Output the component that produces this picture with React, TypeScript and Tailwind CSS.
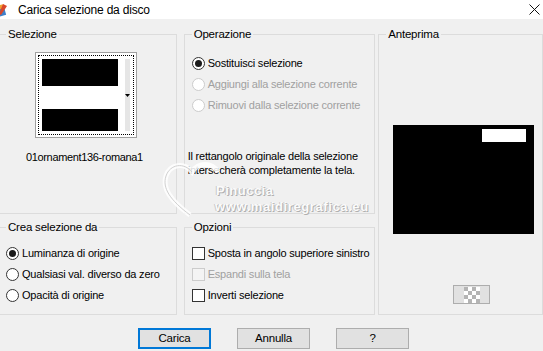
import React from "react";

const Radio = ({ checked = false, disabled = false }: { checked?: boolean; disabled?: boolean }) => (
  <span
    className={`flex items-center justify-center w-[13px] h-[13px] rounded-full border bg-white ${
      disabled ? "border-[#cccccc] bg-[#f4f4f4]" : "border-[#333333]"
    }`}
  >
    {checked && <span className="w-[7px] h-[7px] rounded-full bg-[#1a1a1a]" />}
  </span>
);

const Check = ({ disabled = false }: { disabled?: boolean }) => (
  <span
    className={`block w-[13px] h-[13px] border ${disabled ? "border-[#cccccc] bg-[#f4f4f4]" : "border-[#333333] bg-white"}`}
  />
);

const Option = ({
  label,
  checked,
  disabled,
  box,
}: {
  label: string;
  checked?: boolean;
  disabled?: boolean;
  box?: boolean;
}) => (
  <div className="flex items-center gap-[3px] h-[21px] whitespace-nowrap">
    {box ? <Check disabled={disabled} /> : <Radio checked={checked} disabled={disabled} />}
    <span className={disabled ? "text-[#a0a0a0]" : "text-black"}>{label}</span>
  </div>
);

const Legend = ({ children }: { children: React.ReactNode }) => (
  <legend className="ml-[7px] px-[2px] leading-[14px] text-[11.5px]">{children}</legend>
);

const Button = ({ label, focused }: { label: string; focused?: boolean }) => (
  <button
    className={`w-[73px] h-[21px] bg-[#e1e1e1] text-[11.5px] ${
      focused ? "border-2 border-[#0078d7]" : "border border-[#adadad]"
    }`}
  >
    {label}
  </button>
);

const App = () => {
  const cells = Array.from({ length: 16 }, (_, i) => (Math.floor(i / 4) + i) % 2 === 0);

  return (
    <div className="relative w-[543px] h-[351px] overflow-hidden bg-[#f0f0f0] text-[11px] tracking-[-0.2px] text-black font-['Liberation_Sans',Arial,sans-serif]">
      {/* title bar */}
      <div className="flex items-center h-[19px] bg-white">
        <svg width="14" height="14" viewBox="0 0 14 14" className="-ml-[6px]">
          <rect x="2" y="3" width="9" height="10" fill="#3d7fc9" transform="rotate(-15 7 8)" />
          <rect x="3" y="2" width="8" height="4" fill="#f0a030" transform="rotate(-15 7 8)" />
          <path d="M9 1 L13 3 L7 12 L5 11 Z" fill="#d9472b" />
        </svg>
        <span className="ml-[10px] text-[12px] tracking-[-0.2px]">Carica selezione da disco</span>
        <svg width="11" height="11" viewBox="0 0 11 11" className="ml-auto mr-[3px]">
          <path d="M0.5 0.5 L10.5 10.5 M10.5 0.5 L0.5 10.5" stroke="#111" strokeWidth="1" />
        </svg>
      </div>

      {/* groups */}
      <div className="flex mt-[8px] -ml-[2px]">
        <div className="flex flex-col w-[180px] gap-[6px]">
          <fieldset className="h-[187px] border border-[#dcdcdc]">
            <Legend>Selezione</Legend>
            <div className="ml-[36px] mt-[11px] w-[102px] h-[86px] border border-[#a0a0a0] bg-white p-[2px]">
              <div className="flex h-full border border-dotted border-black p-[3px]">
                <div className="flex flex-col w-[78px]">
                  <div className="h-[27px] bg-black" />
                  <div className="h-[23px] bg-white" />
                  <div className="flex-1 bg-black" />
                </div>
                <div className="w-[7px] bg-white" />
                <div className="flex items-center justify-center flex-1 bg-[#e6e6e6]">
                  <svg width="5" height="3" viewBox="0 0 5 3">
                    <path d="M0 0 H5 L2.5 3 Z" fill="#000" />
                  </svg>
                </div>
              </div>
            </div>
            <div className="mt-[11px] ml-[27px] tracking-[-0.35px] text-[11px]">01ornament136-romana1</div>
          </fieldset>
          <fieldset className="h-[95px] border border-[#dcdcdc]">
            <Legend>Crea selezione da</Legend>
            <div className="flex flex-col ml-[7px] mt-[9px]">
              <Option label="Luminanza di origine" checked />
              <Option label="Qualsiasi val. diverso da zero" />
              <Option label="Opacità di origine" />
            </div>
          </fieldset>
        </div>

        <div className="flex flex-col w-[193px] ml-[7px] gap-[6px]">
          <fieldset className="h-[187px] border border-[#dcdcdc]">
            <Legend>Operazione</Legend>
            <div className="flex flex-col ml-[7px] mt-[12px]">
              <Option label="Sostituisci selezione" checked />
              <Option label="Aggiungi alla selezione corrente" disabled />
              <Option label="Rimuovi dalla selezione corrente" disabled />
            </div>
            <p className="mt-[33px] ml-[3px] leading-[14px]">
              Il rettangolo originale della selezione
              <br />
              intersecherà completamente la tela.
            </p>
          </fieldset>
          <fieldset className="h-[95px] border border-[#dcdcdc]">
            <Legend>Opzioni</Legend>
            <div className="flex flex-col ml-[7px] mt-[9px]">
              <Option box label="Sposta in angolo superiore sinistro" />
              <Option box disabled label="Espandi sulla tela" />
              <Option box label="Inverti selezione" />
            </div>
          </fieldset>
        </div>

        <fieldset className="w-[166px] h-[288px] ml-[3px] border border-[#dcdcdc]">
          <Legend>Anteprima</Legend>
          <div className="flex justify-end ml-[14px] mt-[84px] w-[141px] h-[109px] bg-black pt-[4px] pr-[8px]">
            <div className="w-[44px] h-[13px] bg-white" />
          </div>
          <div className="flex items-center justify-center ml-[74px] mt-[51px] w-[37px] h-[19px] border border-[#adadad] bg-[#e1e1e1]">
            <div className="grid grid-cols-4 w-[16px] h-[16px]">
              {cells.map((c, i) => (
                <div key={i} className={c ? "bg-[#b4b4b4]" : "bg-white"} />
              ))}
            </div>
          </div>
        </fieldset>
      </div>

      {/* buttons */}
      <div className="flex mt-[13px] ml-[138px] gap-[26px]">
        <Button label="Carica" focused />
        <Button label="Annulla" />
        <Button label="?" />
      </div>

      {/* watermark */}
      <div className="absolute left-[160px] top-[160px] pointer-events-none">
        <svg width="70" height="60" viewBox="0 0 70 60">
          <path
            d="M30 55 C10 40 2 28 6 16 C10 4 24 2 32 12 C38 2 52 2 58 12"
            fill="none"
            stroke="#ffffff"
            strokeWidth="5"
            opacity="0.85"
          />
          <path
            d="M30 55 C10 40 2 28 6 16 C10 4 24 2 32 12"
            fill="none"
            stroke="#d0d0d0"
            strokeWidth="1"
          />
        </svg>
      </div>
      <div className="absolute left-[216px] top-[183px] pointer-events-none font-bold text-[#fbfbfb] [text-shadow:1px_1px_0_#b0b0b0,-1px_0_0_#c8c8c8] leading-[16px]">
        <div className="text-[13px] tracking-[0.5px]">Pinuccia</div>
        <div className="text-[13px] tracking-[0.6px] -ml-[1px]">www.maidiregrafica.eu</div>
      </div>
    </div>
  );
};

export default App;
